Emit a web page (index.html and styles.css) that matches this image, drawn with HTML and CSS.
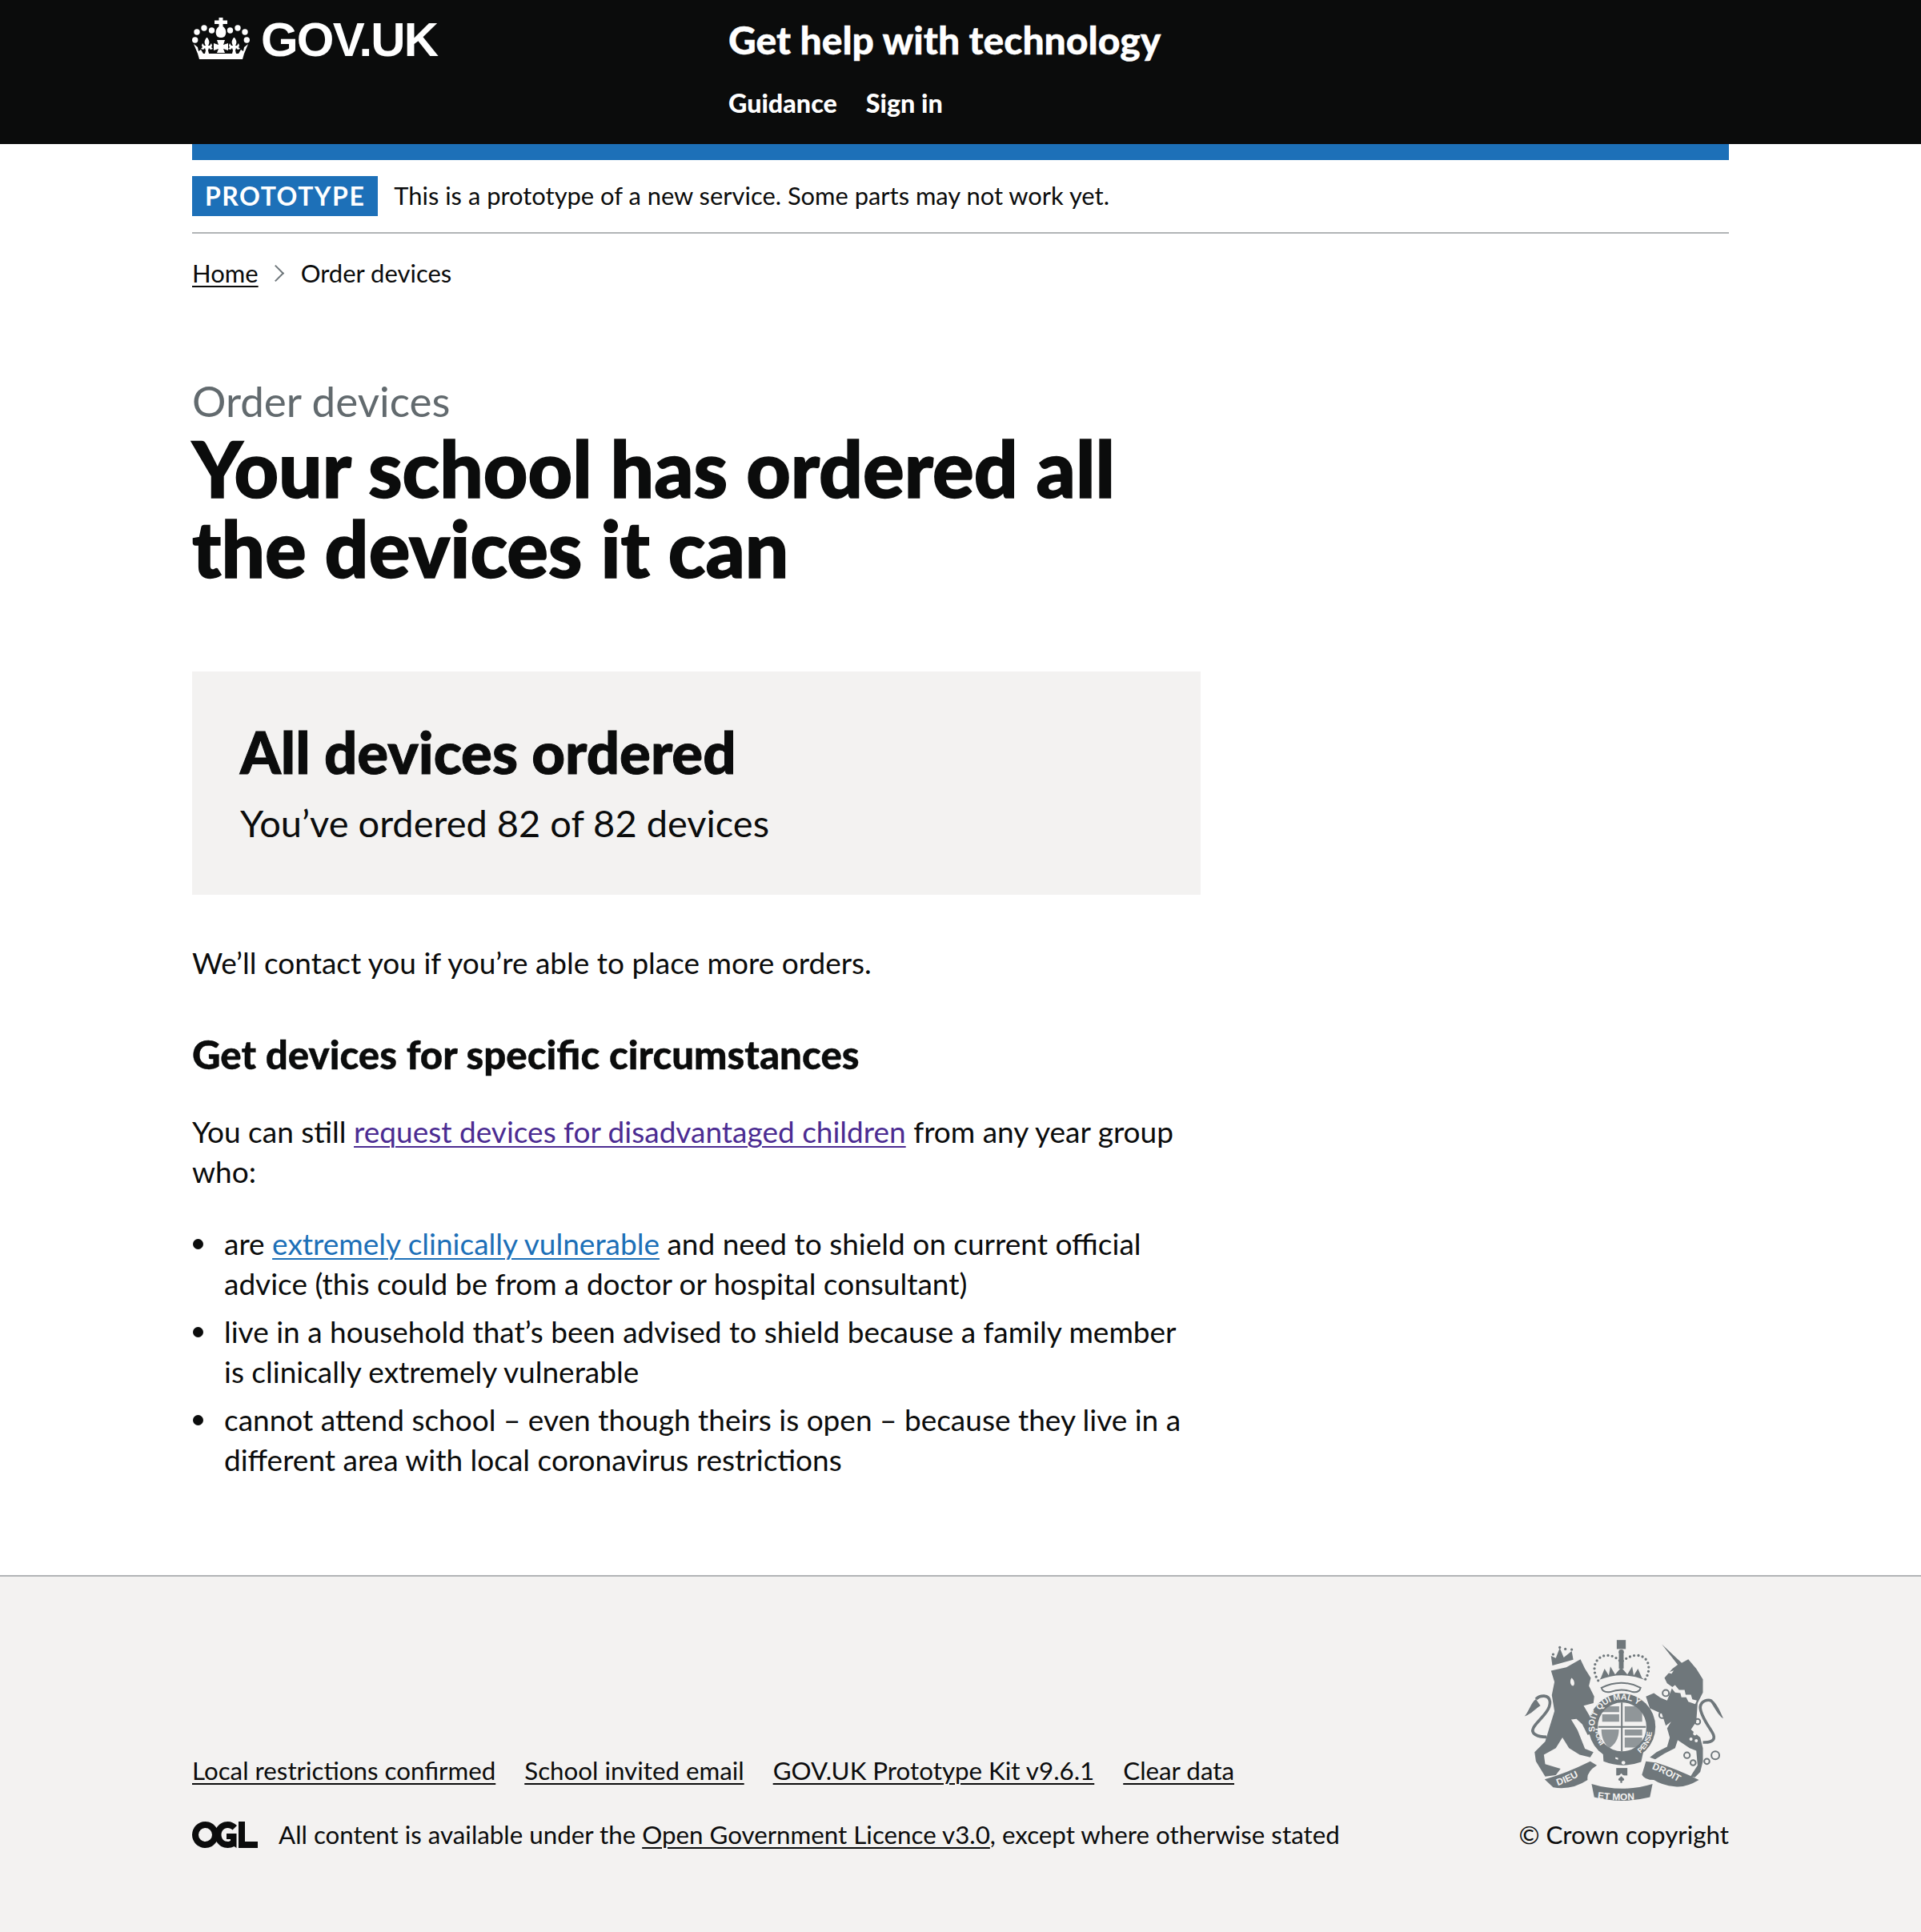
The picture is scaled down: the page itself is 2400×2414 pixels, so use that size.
FILE: index.html
```html
<!DOCTYPE html>
<html lang="en">
<head>
<meta charset="utf-8">
<title>Order devices</title>
<link rel="stylesheet" href="styles.css">
</head>
<body>
<header class="hdr">
  <div class="wrap hdr-in">
    <a class="logo">
      <svg class="crown" viewBox="0 0 72 52" width="72" height="52" aria-hidden="true">
        <g fill="#fff">
          <path d="M33.500 0h5v3.500h5.500v4.500h-5.500v3c4 3 5 8 2.500 12-1 1.500-3 2-5 2s-4-.5-5-2c-2.500-4-1.500-9 2.500-12V8H28V3.500h5.500z"/>
          <circle cx="6" cy="18" r="3.700"/><circle cx="15" cy="13" r="3.700"/><circle cx="24.500" cy="16" r="3.700"/><circle cx="47.500" cy="16" r="3.700"/><circle cx="57" cy="13" r="3.700"/><circle cx="66" cy="18" r="3.700"/><circle cx="3.700" cy="28" r="3.700"/><circle cx="68.300" cy="28" r="3.700"/>
          <path d="M9 52 7 45 2 33l5 4 1 5 3-2 3 5h44l3-5 3 2 1-5 5-4-5 12-2 7z"/>
          <path d="M19 25c2 3 3 5 2 8l-1 2h2l2-3 1 3-1 2 2 2-3 1-2-2-1 3 1 4h-5l1-4-1-3-2 2-3-1 2-2-1-2 1-3 2 3h2l-1-2c-1-3 0-5 2-8zM53 25c2 3 3 5 2 8l-1 2h2l2-3 1 3-1 2 2 2-3 1-2-2-1 3 1 4h-5l1-4-1-3-2 2-3-1 2-2-1-2 1-3 2 3h2l-1-2c-1-3 0-5 2-8zM31 28h10l-2 6 3-1 3-1v9l-6-2 2 5H31l2-5-6 2v-9l6 2z"/>
        </g>
      </svg>
      <span class="logo-text">GOV.UK</span>
    </a>
    <div class="svc">
      <a class="svc-name">Get help with technology</a>
      <nav class="nav"><a>Guidance</a><a>Sign in</a></nav>
    </div>
  </div>
</header>
<div class="wrap">
  <div class="bar"></div>
  <div class="phase"><strong class="tag">PROTOTYPE</strong><span>This is a prototype of a new service. Some parts may not work yet.</span></div>
  <div class="crumbs"><a class="lnk">Home</a><span class="chev"></span><span>Order devices</span></div>
  <main class="main">
    <div class="col">
      <span class="caption">Order devices</span>
      <h1 class="title">Your school has ordered all the devices it can</h1>
      <div class="panel">
        <h2 class="panel-h">All devices ordered</h2>
        <p class="panel-p">You’ve ordered 82 of 82 devices</p>
      </div>
      <p class="body">We’ll contact you if you’re able to place more orders.</p>
      <h2 class="sub">Get devices for specific circumstances</h2>
      <p class="body">You can still <a class="visited">request devices for disadvantaged children</a> from any year group who:</p>
      <ul class="list">
        <li>are <a class="blue">extremely clinically vulnerable</a> and need to shield on current official advice (this could be from a doctor or hospital consultant)</li>
        <li>live in a household that’s been advised to shield because a family member is clinically extremely vulnerable</li>
        <li>cannot attend school – even though theirs is open – because they live in a different area with local coronavirus restrictions</li>
      </ul>
    </div>
  </main>
</div>
<footer class="ftr">
  <div class="wrap ftr-in">
    <div class="ftr-left">
      <div class="ftr-links"><a class="lnk">Local restrictions confirmed</a><a class="lnk">School invited email</a><a class="lnk">GOV.UK Prototype Kit v9.6.1</a><a class="lnk">Clear data</a></div>
      <div class="ogl">
        <svg class="ogl-logo" viewBox="0 0 82 33" width="82" height="33" aria-hidden="true"><path fill="#0b0c0c" fill-rule="evenodd" d="M16.500 0a16.500 16.500 0 1 0 0 33c6 0 11-3 14-8 3 5 8 8 14 8 3 0 6-1 8-2l3 2V15H43v7h5v2c-1 .5-2 1-3.500 1-4.500 0-8-3.500-8-8.500S40 8 44.500 8c2.500 0 4.500 1 6 2.500L56 5c-3-3-7-5-11.500-5-6 0-11 3-14 8-3-5-8-8-14-8zm0 8a8.500 8.500 0 1 1 0 17 8.500 8.500 0 0 1 0-17zM58 0h8v25h16v8H58z"/></svg>
        <span>All content is available under the <a class="lnk">Open Government Licence v3.0</a>, except where otherwise stated</span>
      </div>
    </div>
    <div class="crest">
      <svg class="arms" viewBox="70 62 755 612" width="250" height="203" aria-hidden="true">
        <defs>
          <path id="garter-top" d="M338 410 A103 103 0 1 1 540 410"/>
          <path id="garter-low" d="M340 395 A103 103 0 0 0 372 478"/>
          <path id="garter-right" d="M505 492 A112 112 0 0 0 553 405"/>
          <path id="rib-left" d="M198 612 Q260 590 322 548"/>
          <path id="rib-mid" d="M345 660 Q440 672 530 660"/>
          <path id="rib-right" d="M552 548 Q610 570 675 612"/>
        </defs>
        <g class="arm-fill">
          <path d="M172 178 230 165 283 135 300 170 322 205 315 235 335 275 332 300 295 310 345 395 340 412 310 420 290 380 268 360 248 362 272 402 300 472 332 485 320 505 280 495 240 470 215 430 190 470 145 495 150 530 208 548 190 572 150 577 115 520 110 485 150 445 165 395 185 330 175 270 185 220z"/>
          <path d="M177 158 172 122 190 130 205 92 220 128 250 104 256 136z"/>
          <circle cx="180" cy="116" r="5"/><circle cx="205" cy="90" r="5"/><circle cx="226" cy="96" r="5"/><circle cx="250" cy="98" r="5"/>
          <path d="M590 78 665 148 690 135 720 170 745 210 745 260 725 300 720 370 700 400 735 430 745 470 745 520 735 560 715 580 698 577 725 535 720 480 695 470 650 440 640 470 600 490 565 512 545 505 570 485 610 465 620 430 610 395 625 370 605 385 590 340 545 320 530 275 560 262 585 280 610 290 630 240 610 225 600 205 630 170 650 155z"/>
          <path d="M115 285C95 300 90 330 72 350 100 340 112 322 132 310zM770 290C790 315 800 345 822 358 808 325 795 300 780 288z"/>
          <path d="M420 62h34v34h-34z"/>
          <circle cx="437" cy="108" r="10"/>
          <path d="M428 115h18v55h-18z"/>
          <path d="M355 212Q437 178 525 212L515 205 500 170 484 196 478 162 460 192 437 165 414 192 396 162 390 196 374 170 360 205z"/>
          <circle cx="440" cy="390" r="126"/>
          <path d="M148 588Q230 565 320 520L345 535Q305 560 310 590 250 630 180 618zM325 605Q440 640 555 605L545 655Q440 682 335 655zM515 570 530 520 570 525Q650 550 730 590 680 620 640 615 590 610 560 590 525 590 515 570z"/>
          <path d="M418 545h42v28h-42z"/>
          <path d="M368 485 520 485 512 522Q440 548 370 520z"/>
        </g>
        <g class="arm-line">
          <path class="chain" d="M350 215C320 170 340 120 385 120 410 120 425 135 437 145 450 135 470 120 495 120 540 120 555 170 525 215"/>
          <path d="M362 242Q437 205 510 242 505 262 480 258 437 242 395 258 368 262 362 242z"/>
          <path class="tail" d="M155 428C120 428 95 415 105 395 115 370 170 335 168 295 165 265 130 270 115 285"/>
          <path class="tail" d="M745 448C785 450 795 435 780 410 765 385 735 345 735 315 738 290 765 285 778 292"/>
          <circle cx="605" cy="262" r="12"/><circle cx="592" cy="345" r="12"/><circle cx="725" cy="370" r="10"/><circle cx="685" cy="497" r="11"/><circle cx="708" cy="525" r="10"/><circle cx="760" cy="520" r="10"/><circle cx="792" cy="497" r="15"/>
        </g>
        <g class="arm-bg">
          <circle cx="440" cy="390" r="92"/>
          <circle cx="715" cy="415" r="7"/><circle cx="700" cy="436" r="6"/><circle cx="720" cy="442" r="6"/>
          <path d="M626 242 640 260 660 262 664 278 682 278 690 295 716 304 722 290 705 286 700 268 680 268 676 250 655 250 640 232z"/>
          <path d="M250 205c10 8 14 25 5 30-10 0-14-20-5-30zM415 504l10 3v7l-10-3zM445 518a7 7 0 1 0 .1 0zM610 185l25-8-8 12z"/>
          <path d="M437 565c10 12 22 14 28 20 4 10-6 18-14 14l-5 12h-18l-5-12c-8 4-18-4-14-14 6-6 18-8 28-20z"/>
        </g>
        <path class="arm-fill" d="M437 576c5 6 10 8 11 12 0 4-4 6-7 4l-1 9h-6l-1-9c-3 2-7 0-7-4 1-4 6-6 11-12z"/>
        <g class="arm-fill">
          <path d="M436 298h6v184h-6zM350 387h180v6H350z"/>
          <path d="M365 312h64v22h-64zM365 342h64v28h-64zM450 312h66v58h-66z" opacity=".75"/>
          <path d="M362 400h66c0 36-16 58-36 70-16-14-30-34-30-70zM450 400h66v22h-66zM450 430h66v38h-66z" opacity=".75"/>
        </g>
        <g class="arm-text">
          <text font-size="32"><textPath href="#garter-top" startOffset="2">SOIT QUI MAL Y</textPath></text>
          <text font-size="28"><textPath href="#garter-low">HONI</textPath></text>
          <text font-size="28"><textPath href="#garter-right" startOffset="4">PENSE</textPath></text>
          <text font-size="36"><textPath href="#rib-left">DIEU</textPath></text>
          <text font-size="36"><textPath href="#rib-mid" startOffset="2">ET MON</textPath></text>
          <text font-size="36"><textPath href="#rib-right">DROIT</textPath></text>
        </g>
      </svg>
      <span class="copy">© Crown copyright</span>
    </div>
  </div>
</footer>
</body>
</html>
```

FILE: styles.css
```css
*{box-sizing:border-box}
html,body{margin:0;padding:0}
body{font-family:"Lato","Noto Sans",sans-serif;color:#0b0c0c;font-size:37px;line-height:50px;background:#fff}
p,h1,h2,ul{margin:0;padding:0}
.wrap{width:1920px;margin:0 auto}
.hdr{background:#0b0c0c;height:180px;color:#fff}
.hdr-in{display:flex}
.logo{width:670px;display:flex;align-items:flex-start;padding-top:22px;gap:14px}
.crown{display:block}
.logo-text{font:700 60px/60px "Liberation Sans",sans-serif;letter-spacing:-1.8px;margin-top:-2px}
.svc{display:flex;flex-direction:column}
.svc-name{font-weight:900;font-size:48px;line-height:60px;margin-top:20px;-webkit-text-stroke:.4px #fff}
.nav{display:flex;gap:36px;margin-top:24px;font-weight:900;font-size:32.300px;line-height:50px}
.bar{height:20px;background:#1d70b8}
.phase{display:flex;align-items:center;gap:20px;height:92px;border-bottom:2px solid #b1b4b6;font-size:30.900px}
.tag{background:#1d70b8;color:#fff;font-size:32px;line-height:50px;padding:0 16px;letter-spacing:1.500px}
.crumbs{display:flex;align-items:center;margin-top:29px;font-size:31px;line-height:40px}
.lnk{text-decoration:underline;text-underline-offset:4px;text-decoration-thickness:2px}
.chev{width:15px;height:15px;border-top:2px solid #6f777b;border-right:2px solid #6f777b;transform:rotate(45deg);margin:0 24px 0 14px}
.main{padding-top:110px;padding-bottom:109px}
.col{width:1260px}
.caption{display:block;color:#626a6e;font-size:53px;line-height:60px}
.title{font-size:96.400px;line-height:100px;font-weight:900;margin-top:4px;margin-bottom:104px;max-width:1210px;-webkit-text-stroke:1.500px #0b0c0c}
.panel{background:#f3f2f1;padding:60px;height:279px;margin-bottom:60px}
.panel-h{font-size:72.500px;line-height:80px;font-weight:900;margin-bottom:24px;-webkit-text-stroke:1px #0b0c0c}
.panel-p{font-size:47px;line-height:50px}
.body{margin-bottom:40px}
.sub{font-weight:900;font-size:49.200px;line-height:60px;margin-bottom:42px;margin-top:59px;-webkit-text-stroke:.4px #0b0c0c}
.visited{color:#4c2c92;text-decoration:underline;text-underline-offset:4px;text-decoration-thickness:2px}
.blue{color:#1d70b8;text-decoration:underline;text-underline-offset:4px;text-decoration-thickness:2px}
.list{padding-left:40px;list-style:none}
.list li{margin-bottom:10px;position:relative}
.list li::before{content:"";position:absolute;left:-39px;top:19px;width:13px;height:13px;border-radius:50%;background:#0b0c0c}
.ftr{background:#f3f2f1;border-top:2px solid #b1b4b6;height:446px}
.ftr-in{display:flex;justify-content:space-between;align-items:flex-end;padding-top:79px}
.ftr-left{font-size:31.300px;line-height:40px}
.ftr-links{display:flex;gap:36px;margin-bottom:40px}
.ogl{display:flex;align-items:center;gap:26px}
.crest{display:flex;flex-direction:column;align-items:flex-end;font-size:31.300px;line-height:40px}
.arms{display:block;margin-bottom:20px;margin-right:6px}
.arm-fill{fill:#6f777b}
.arm-bg{fill:#f3f2f1}
.arm-line{fill:none;stroke:#6f777b;stroke-width:6}
.arm-line .chain{stroke-width:10;stroke-linecap:round;stroke-dasharray:0 16}
.arm-line .tail{stroke-width:11}
.arm-text{fill:#f3f2f1;font-family:"Liberation Sans",sans-serif;font-weight:700}
```
